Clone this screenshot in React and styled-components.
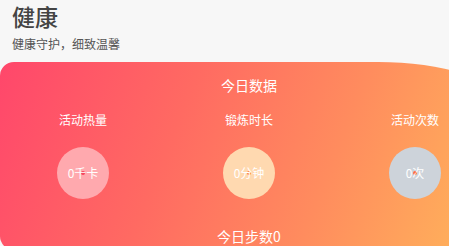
import styled, { createGlobalStyle } from 'styled-components';

const stats = [
  { label: '活动热量', value: '0千卡', bg: '#ffa9ae', dot: '#f5465d' },
  { label: '锻炼时长', value: '0分钟', bg: '#ffd9b0', dot: '#ff8a3d' },
  { label: '活动次数', value: '0次', bg: '#cdd3da', dot: '#ff7040' },
];

export default function App() {
  return (
    <>
      <GlobalStyle />
      <PageStyled>
        <HeaderStyled>
          <h1>健康</h1>
          <p>健康守护，细致温馨</p>
        </HeaderStyled>
        <CardStyled>
          <CardTitle>今日数据</CardTitle>
          <StatRow>
            {stats.map((el) => (
              <StatCol key={el.label}>
                <span>{el.label}</span>
                <Circle $bg={el.bg} $dot={el.dot}>
                  <span>{el.value}</span>
                </Circle>
              </StatCol>
            ))}
          </StatRow>
          <Steps>今日步数0</Steps>
        </CardStyled>
      </PageStyled>
    </>
  );
}

const GlobalStyle = createGlobalStyle`
  html, body {
    margin: 0;
    padding: 0;
    overflow: hidden;
    background: #f7f7f7;
    font-family: "Noto Sans CJK SC", "Noto Sans", sans-serif;
  }
`;

const PageStyled = styled.div`
  width: 449px;
  height: 246px;
  overflow: hidden;
`;

const HeaderStyled = styled.div`
  padding: 0 12px;
  height: 62px;
  h1 {
    margin: 0;
    padding-top: 1px;
    font-size: 23px;
    line-height: 30px;
    font-weight: 500;
    color: #444;
  }
  p {
    margin: 4px 0 0;
    font-size: 12px;
    line-height: 18px;
    color: #555;
  }
`;

const CardStyled = styled.div`
  width: 498px;
  height: 188px;
  box-sizing: border-box;
  padding-top: 12px;
  border-radius: 14px 120px 14px 14px / 14px 40px 14px 14px;
  background: linear-gradient(112deg, #ff476b 0%, #ff6a62 35%, #ff8c5e 65%, #ffb85a 100%);
  color: #fff;
  display: flex;
  flex-direction: column;
  align-items: center;
`;

const CardTitle = styled.div`
  font-size: 14px;
  line-height: 22px;
`;

const StatRow = styled.div`
  width: 100%;
  display: grid;
  grid-template-columns: repeat(3, 1fr);
  margin-top: 15px;
`;

const StatCol = styled.div`
  display: flex;
  flex-direction: column;
  align-items: center;
  font-size: 12px;
  line-height: 18px;
`;

const Circle = styled.div`
  position: relative;
  margin-top: 18px;
  width: 52px;
  height: 52px;
  border-radius: 50%;
  background: ${(p) => p.$bg};
  display: flex;
  align-items: center;
  justify-content: center;
  &::before {
    content: '';
    position: absolute;
    left: 24px;
    top: 24px;
    width: 4px;
    height: 4px;
    border-radius: 50%;
    background: ${(p) => p.$dot};
  }
  span {
    position: relative;
    font-size: 12px;
  }
`;

const Steps = styled.div`
  margin-top: 26px;
  font-size: 14px;
  line-height: 22px;
`;
